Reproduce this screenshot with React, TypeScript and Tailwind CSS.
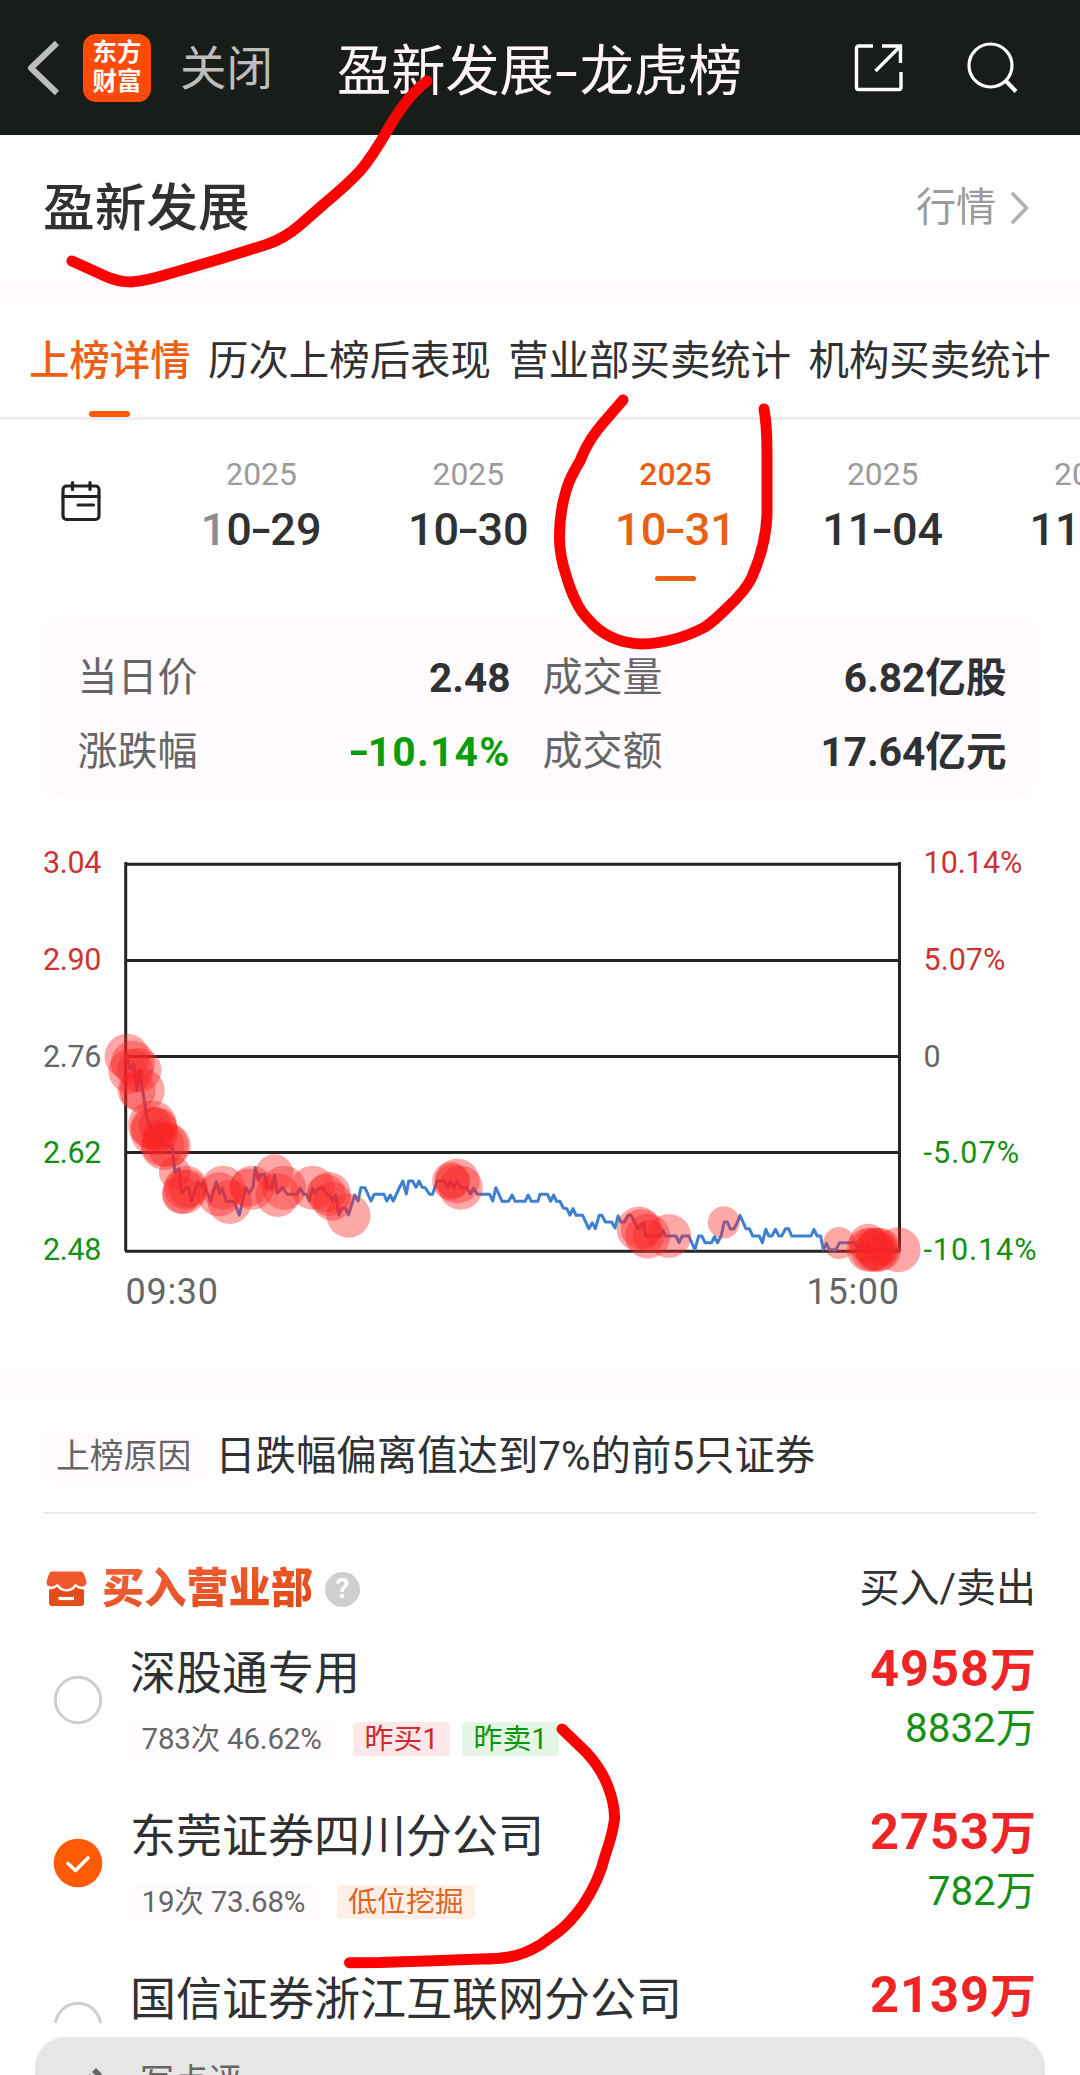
import React from 'react';
import clsx from 'clsx';

const TABS = ['上榜详情', '历次上榜后表现', '营业部买卖统计', '机构买卖统计'];

const DATES = [
  { year: '2025', day: '10-29' },
  { year: '2025', day: '10-30' },
  { year: '2025', day: '10-31', active: true },
  { year: '2025', day: '11-04' },
  { year: '2025', day: '11-05' },
];

interface Tag {
  text: string;
  tone: 'red' | 'green' | 'orange';
}

interface Branch {
  name: string;
  stat: string;
  tags: Tag[];
  buy: string;
  sell: string;
  checked?: boolean;
}

const BRANCHES: Branch[] = [
  {
    name: '深股通专用',
    stat: '783次 46.62%',
    tags: [{ text: '昨买1', tone: 'red' }, { text: '昨卖1', tone: 'green' }],
    buy: '4958',
    sell: '8832万',
  },
  {
    name: '东莞证券四川分公司',
    stat: '19次 73.68%',
    tags: [{ text: '低位挖掘', tone: 'orange' }],
    buy: '2753',
    sell: '782万',
    checked: true,
  },
  { name: '国信证券浙江互联网分公司', stat: '', tags: [], buy: '2139', sell: '' },
];

// Intraday chart, in plot units
const UNIT_X = 2.904;
const UNIT_Y = 3;

const MORNING =
  '368,649 378,688 388,672 397,752 406,692 420,790 427,835 442,875 455,857 465,880 471,918 500,918 508,998 520,985 527,1060 540,1043 548,1045 556,1083 575,1025 583,1040 590,1028 612,1083 628,1025 638,1060 645,1045 657,1083 680,1085 695,1125 714,1043 724,1060 735,1040 741,983 750,1020 758,1003 768,1003 778,1043 790,1043 797,1005 805,1060 820,1043 835,1063 862,1063 872,1045 882,1063 890,1063 898,1083 908,1045 916,1060 925,1045 938,1045 950,1063 958,1065 965,1083 975,1065 984,1125 992,1105 1003,1105 1012,1125 1030,1065 1040,1083 1048,1043 1060,1043 1077,1083 1087,1063 1115,1063 1123,1083 1133,1065 1142,1083 1160,1043 1170,1023 1180,1062 1187,1023 1198,1023 1208,1042 1217,1023 1226,1042 1235,1043 1247,1063 1256,1063 1270,1023 1290,1023 1300,1042 1308,1023 1318,1042 1328,1023 1336,1042 1356,1044 1366,1062 1375,1045 1387,1063 1422,1063 1431,1083 1440,1043 1458,1084 1477,1084 1487,1065 1496,1084 1525,1084 1534,1065 1543,1084 1562,1084';
const AFTERNOON =
  '1568,1063 1590,1063 1599,1084 1608,1065 1616,1084 1626,1084 1636,1104 1646,1106 1655,1125 1664,1106 1673,1126 1692,1126 1710,1166 1720,1148 1729,1166 1740,1126 1748,1126 1758,1146 1776,1146 1786,1164 1795,1128 1803,1146 1814,1146 1824,1126 1833,1126 1852,1166 1868,1148 1876,1188 1918,1188 1925,1170 1933,1188 1963,1188 1972,1208 1981,1188 2000,1188 2018,1229 2029,1188 2038,1188 2048,1208 2066,1208 2075,1190 2084,1208 2094,1188 2103,1146 2112,1146 2121,1167 2131,1167 2141,1148 2149,1126 2166,1166 2176,1166 2186,1188 2205,1188 2214,1208 2224,1168 2233,1188 2242,1188 2252,1168 2262,1188 2270,1188 2281,1166 2290,1166 2299,1188 2355,1188 2364,1168 2373,1188 2383,1188 2391,1229 2400,1210 2409,1229 2428,1229 2438,1208 2483,1208 2493,1229 2503,1210 2513,1229 2521,1210 2530,1229 2612,1229';

const LINE = `${MORNING} ${AFTERNOON}`
  .split(' ')
  .map((pair) => {
    const [x, y] = pair.split(',').map(Number);
    return `${(x / UNIT_X).toFixed(1)},${(y / UNIT_Y).toFixed(1)}`;
  })
  .join(' ');

// x, y, radius
const BUBBLES = [
  [369, 649, 22.5], [386, 668, 22], [380, 693, 22.5], [405, 690, 22], [397, 752, 19], [413, 752, 22.5],
  [443, 855, 24.5], [440, 862, 21], [448, 875, 24], [458, 858, 19], [472, 915, 21.5], [478, 918, 24], [490, 916, 22], [462, 885, 16],
  [508, 998, 16], [540, 1043, 22], [535, 1056, 22], [526, 1065, 19], [545, 1045, 19],
  [648, 1043, 22], [637, 1063, 22], [667, 1086, 22], [722, 1043, 19], [732, 1043, 22], [797, 1000, 19],
  [825, 1043, 22], [806, 1065, 22], [908, 1043, 22], [948, 1060, 19], [955, 1062, 22], [965, 1084, 19.5], [1012, 1127, 22],
  [1310, 1023, 19], [1314, 1023, 17], [1328, 1023, 22.5], [1338, 1043, 22],
  [1856, 1167, 22.5], [1861, 1167, 20], [1881, 1188, 22.5], [1884, 1188, 16], [1943, 1188, 22], [2102, 1147, 16],
  [2437, 1209, 16], [2521, 1210, 19.5], [2523, 1229, 22], [2533, 1229, 22], [2541, 1229, 20], [2546, 1229, 22], [2553, 1229, 22], [2560, 1229, 16], [2608, 1229, 22.5],
];

const LEVELS = [
  { y: 24.3, price: '3.04', pct: '10.14%', color: '#cb3432' },
  { y: 120.5, price: '2.90', pct: '5.07%', color: '#cb3432' },
  { y: 216.5, price: '2.76', pct: '0', color: '#666666' },
  { y: 312.5, price: '2.62', pct: '-5.07%', color: '#159015', width: 95.5 },
  { y: 411.3, price: '2.48', pct: '-10.14%', color: '#159015', width: 113 },
];

// Text whose hyphens are drawn wide, like the numerals around them
const Wide = ({ text }: { text: string }) => (
  <>
    {text.split(/(-)/).map((part, i) =>
      part === '-' ? (
        <span key={i} className="inline-block w-[0.41em] -translate-y-[0.02em] scale-x-[1.4] text-center">-</span>
      ) : (
        <React.Fragment key={i}>{part}</React.Fragment>
      ),
    )}
  </>
);

const Header = () => (
  <header className="flex h-[135px] shrink-0 items-center bg-[#191d1a] pl-[26px]">
    <svg width="34" height="58" viewBox="0 0 34 58" fill="none" stroke="#bdbdbd" strokeWidth="6">
      <path d="M31 4 5 29l26 25" strokeLinejoin="round" />
    </svg>
    <div className="ml-[23px] flex h-[68px] w-[68px] flex-col items-center justify-center rounded-[13px] bg-[#ff4b05] pb-[2px] text-[24.5px] leading-[29px] font-bold text-white">
      <span>东方</span>
      <span>财富</span>
    </div>
    <span className="mt-[4px] ml-[29px] text-[46.5px] leading-none text-[#bdbdbd]">关闭</span>
    <h1 className="mt-[10px] ml-[64px] w-[420px] text-[54.2px] leading-none whitespace-nowrap text-[#fff5f6]">
      盈新发展<span className="inline-block w-[26px] text-center"><span className="inline-block scale-x-150">-</span></span>龙虎榜
    </h1>
    <svg className="ml-[95px]" width="52" height="52" viewBox="0 0 52 52" fill="none" stroke="#fff" strokeWidth="3.4">
      <path d="M21 4H6.500A2 2 0 0 0 4.500 6V45.500a2 2 0 0 0 2 2H47a2 2 0 0 0 2-2V30M30 4h18.500v17M48 4.500 23.500 29" />
    </svg>
    <svg className="ml-[60px]" width="56" height="56" viewBox="0 0 56 56" fill="none" stroke="#fff" strokeWidth="3.2">
      <circle cx="26.500" cy="25.500" r="21.500" />
      <path d="m41.500 40.500 10.500 11" strokeWidth="4" />
    </svg>
  </header>
);

const DateStrip = () => (
  <div className="relative flex h-[196px] shrink-0">
    <div className="w-[157.5px] shrink-0 pt-[60px] pl-[60px]">
      <svg width="42" height="42" viewBox="0 0 42 42" fill="none" stroke="#222" strokeWidth="3.2" strokeLinecap="round">
        <rect x="3" y="6" width="36" height="33.500" rx="3.500" />
        <path d="M3 16.500h36M12.500 2.500v7M30 2.500v7M18 25h15.500" />
      </svg>
    </div>
    {DATES.map((d) => (
      <div
        key={d.day}
        className={clsx('flex w-[207.2px] shrink-0 flex-col items-center pt-[38px]', d.active ? 'text-[#e95f14]' : 'text-[#303132]')}
      >
        <span className={clsx('text-[31.8px] leading-[32px]', d.active ? 'font-medium' : 'text-[#9b9b9b]')}>{d.year}</span>
        <span className="mt-[18px] text-[45px] leading-[44px] font-medium whitespace-nowrap"><Wide text={d.day} /></span>
        {d.active && <span className="mt-[24px] h-[5px] w-[41px] rounded-full bg-[#e95f14]" />}
      </div>
    ))}
    <div className="absolute top-0 left-[157px] h-full w-[72px] bg-white/45" />
  </div>
);

const Stat = ({ label, value, green }: { label: string; value: string; green?: boolean }) => (
  <div className="flex items-center justify-between leading-[74px]">
    <span className="text-[#666]">{label}</span>
    <span className={clsx('font-bold', green ? 'text-[40.8px] tracking-[1.2px] text-[#0a9d0a]' : 'text-[40.6px] text-[#303132]')}>
      <Wide text={value} />
    </span>
  </div>
);

const Chart = () => (
  <svg className="shrink-0" width="1080" height="480" viewBox="0 0 1080 480">
    <g stroke="#232524" strokeWidth="3">
      {LEVELS.map((l) => (
        <line key={l.price} x1="125" x2="900" y1={l.y} y2={l.y} />
      ))}
      <line x1="125.700" x2="125.700" y1="22" y2="411" />
      <line x1="899.500" x2="899.500" y1="22" y2="411" />
    </g>
    <polyline points={LINE} fill="none" stroke="#3c80cf" strokeWidth="3" strokeLinejoin="round" />
    <g fill="#fa2424" fillOpacity="0.4">
      {BUBBLES.map(([x, y, r], i) => (
        <circle key={i} cx={x / UNIT_X} cy={y / UNIT_Y} r={r} />
      ))}
    </g>
    <g fontSize="30.5">
      {LEVELS.map((l, i) => (
        <g key={l.price} fill={l.color}>
          <text x="43" y={33 + i * 96.8} textLength="58.500">{l.price}</text>
          <text x="923.500" y={33 + i * 96.8} textLength={l.width}>{l.pct}</text>
        </g>
      ))}
    </g>
    <g fontSize="36" fill="#666">
      <text x="125.500" y="463.500" textLength="92.500">09:30</text>
      <text x="899" y="463.500" textAnchor="end" textLength="92.500">15:00</text>
    </g>
  </svg>
);

const Radio = ({ checked }: { checked?: boolean }) => (
  <svg className="mt-[50px] ml-[10px] shrink-0" width="50" height="50" viewBox="0 0 50 50" fill="none">
    {checked ? (
      <>
        <circle cx="25" cy="25" r="24.300" fill="#ff5a05" />
        <path d="m15 25.500 7.500 7L35 20" stroke="#fff" strokeWidth="3.600" strokeLinecap="round" strokeLinejoin="round" />
      </>
    ) : (
      <circle cx="25" cy="25" r="22.700" stroke="#cfcfcf" strokeWidth="3" />
    )}
  </svg>
);

const BranchRow = ({ branch }: { branch: Branch }) => (
  <div className="flex h-[163px] shrink-0 pr-[44px] pl-[43px]">
    <Radio checked={branch.checked} />
    <div className="ml-[27px] flex-1 pt-[23px]">
      <div className="text-[46px] leading-[50px] text-[#303132]">{branch.name}</div>
      {branch.stat && (
        <div className="mt-[24px] flex text-[29.5px] leading-[34px] whitespace-nowrap">
          <span className="mr-[20px] rounded bg-[#fffbff] px-[11.5px] tracking-[-0.2px] text-[#666]">{branch.stat}</span>
          {branch.tags.map((t) => (
            <span
              key={t.text}
              className={clsx(
                'mr-[12px] rounded px-[11.5px] text-[28.9px]',
                t.tone === 'red' && 'bg-[#ffe8ea] text-[#cf2a2f]',
                t.tone === 'green' && 'bg-[#e6f6e6] text-[#0a960a]',
                t.tone === 'orange' && 'bg-[#ffefe6] text-[#e0641c]',
              )}
            >
              {t.text}
            </span>
          ))}
        </div>
      )}
    </div>
    <div className="flex flex-col items-end pt-[19px]">
      <span className="flex items-baseline text-[46px] leading-[50px] font-bold text-[#ef2424]">
        <span className="text-[50.5px] tracking-[1px]">{branch.buy}</span>万
      </span>
      <span className="mt-[9px] text-[40.3px] leading-[50px] text-[#159015]">{branch.sell}</span>
    </div>
  </div>
);

// Hand-drawn marker strokes on top of the page
const Marks = () => (
  <svg
    className="pointer-events-none absolute top-0 left-0"
    width="1080"
    height="2075"
    fill="none"
    stroke="#fe0000"
    strokeWidth="11"
    strokeLinecap="round"
    strokeLinejoin="round"
  >
    <path d="M427 81Q413 92 403 106Q395 117 387 131Q372 157 360 171Q348 184 324 204L300 225Q284 239 265 245L220 259L165 275Q145 281 131 282Q118 282 105 276L72 261" />
    <path d="M623 400L604 422Q590 438 583 454Q580 462 576 468Q569 480 566 491Q559 514 559.500 540Q560 557 566 575Q575 606 588 619Q608 643 641.600 644Q675 643 705 627Q713 622 729 606Q746 590 752 577Q766 545 767 515L767 453Q767 425 764 409" />
    <path d="M562 1729L586 1752Q600 1767 607 1784Q615 1804 614.500 1819Q613 1833 605 1856Q599 1881 583 1905Q570 1923 558 1932L540 1945Q523 1955 509 1957Q499 1959 480 1959L427 1961L379 1962.500L349.500 1962.700" />
  </svg>
);

export default function App() {
  return (
    <div className="relative flex h-[2075px] w-[1080px] flex-col overflow-hidden bg-white font-[Roboto,'Noto_Sans_CJK_SC',sans-serif]">
      <Header />

      <div className="flex h-[144px] shrink-0 items-center justify-between pr-[50px] pl-[43px]">
        <h2 className="mt-[3px] text-[51.7px] leading-none font-medium text-[#303132]">盈新发展</h2>
        <div className="mt-[1px] flex items-center text-[40px] leading-none text-[#9b9b9b]">
          行情
          <svg className="ml-[14px]" width="20" height="34" viewBox="0 0 20 34" fill="none" stroke="#b0b0b0" strokeWidth="3.6" strokeLinecap="round">
            <path d="m3 3 13.500 14L3 31" />
          </svg>
        </div>
      </div>
      <div className="h-[24px] shrink-0 bg-[#fffbff]" />

      <nav className="flex h-[117px] shrink-0 gap-[17.5px] border-b-[3px] border-[#f0ebee] pl-[29px] text-[40.4px] whitespace-nowrap text-[#303132]">
        {TABS.map((tab, i) => (
          <div key={tab} className={clsx('flex flex-col items-center', i === 0 && 'font-medium text-[#ec5f14]')}>
            <span className="mt-[34px] leading-[50px]">{tab}</span>
            {i === 0 && <span className="mt-[24px] h-[6px] w-[41px] rounded-full bg-[#ff5a08]" />}
          </div>
        ))}
      </nav>

      <DateStrip />

      <div className="mx-[43px] grid h-[183px] shrink-0 grid-cols-[433px_464px] gap-x-[32px] rounded-[22px] bg-[#fffbff] pt-[24.5px] pb-[10px] pl-[34.5px] text-[40px]">
        <Stat label="当日价" value="2.48" />
        <Stat label="成交量" value="6.82亿股" />
        <Stat label="涨跌幅" value="-10.14%" green />
        <Stat label="成交额" value="17.64亿元" />
      </div>

      <div className="mt-[41px] flex h-[534px] shrink-0">
        <Chart />
      </div>
      <div className="h-[24px] shrink-0 bg-[#fffbff]" />

      <div className="mx-[43px] flex h-[116px] shrink-0 items-center border-b-2 border-[#e9e9e9]">
        <span className="mt-[3px] rounded-[12px] bg-[#fffbff] px-[13px] text-[33.8px] leading-[51px] text-[#666]">上榜原因</span>
        <span className="mt-[3px] ml-[11px] text-[40.4px] leading-[51px] text-[#303132]">日跌幅偏离值达到7%的前5只证券</span>
      </div>

      <div className="flex h-[111px] shrink-0 items-center pt-[39px] pr-[44px] pl-[46px]">
        <svg width="41" height="36" viewBox="0 0 41 36">
          <path d="M6 .5h28.500q2.500 0 3.200 2L40.300 10q.7 5-4.300 5.600-4 0-6-2.600-2 0-4 3.500-5.500 3.500-11 0Q13 13 11 13q-2 2.600-6 2.600Q-.2 15 .7 10L3.300 2.500Q4 .5 6 .5Z" fill="#ef572d" />
          <path d="M3 18.500q4.500 0 8-2.500 1 0 2.500 2.500 7 4 14 0Q29 16 30 16q3.500 2.500 8 2.500V32q0 3-3 3H6q-3 0-3-3Z" fill="#e34d1b" />
          <path d="M12.500 27.500h15.500" stroke="#fff" strokeWidth="3.200" />
        </svg>
        <span className="ml-[15px] bg-gradient-to-br from-[#f4623a] to-[#dd480f] bg-clip-text text-[42.2px] leading-[50px] font-black text-transparent">
          买入营业部
        </span>
        <span className="ml-[12px] flex h-[35px] w-[35px] items-center justify-center rounded-full bg-[#cfcfcf] text-[28px] leading-none font-bold text-white">?</span>
        <span className="ml-auto text-[40px] leading-[50px] text-[#303132]">买入/卖出</span>
      </div>

      {BRANCHES.map((b) => (
        <BranchRow key={b.name} branch={b} />
      ))}

      {/* Comment bar */}
      <div className="absolute bottom-0 left-0 h-[52px] w-full overflow-hidden bg-white px-[35px] pt-[14px]">
        <div className="flex h-[90px] items-center rounded-[30px] bg-[#e6e6e6] pl-[37px] text-[34px] leading-none text-[#666]">
          <svg width="34" height="34" viewBox="0 0 34 34" fill="#666">
            <path d="m2 25 16-16 6 6L8 31H2ZM20 7l4-4 6 6-4 4Z" />
          </svg>
          <span className="-mt-[2px] ml-[34px]">写点评</span>
        </div>
      </div>

      <Marks />
    </div>
  );
}
